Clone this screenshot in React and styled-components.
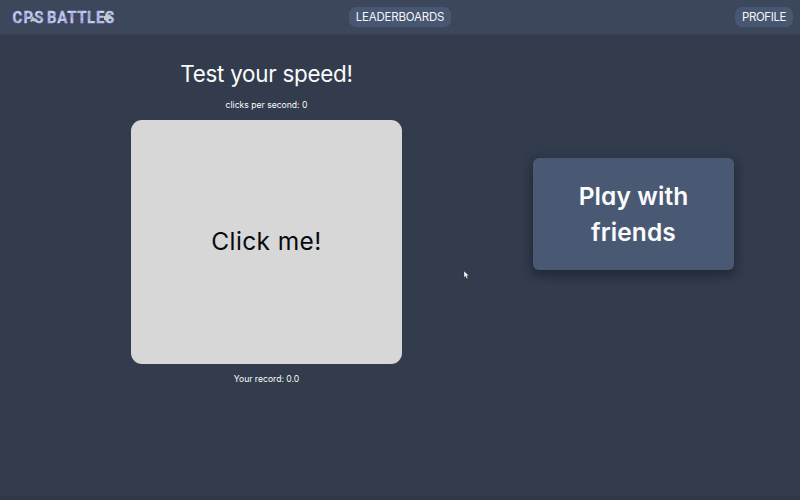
import React from "react";
import styled, { createGlobalStyle } from "styled-components";

const GlobalStyle = createGlobalStyle`
  *, *::before, *::after { box-sizing: border-box; }
  body {
    margin: 0;
    background: #323c4d;
    color: #fafbfc;
    font-family: Inter, "Open Sans", sans-serif;
    font-feature-settings: "cv11" 1;
    overflow: hidden;
  }
  button { font: inherit; font-feature-settings: inherit; border: 0; padding: 0; cursor: pointer; }
`;

const Page = styled.div`
  height: 500px;
  display: flex;
  flex-direction: column;
  border-bottom: 4px solid #303746;
`;

const Header = styled.header`
  height: 35px;
  flex: none;
  display: grid;
  grid-template-columns: 1fr auto 1fr;
  align-items: center;
  padding: 0 7px;
  background: #3d475b;
  border-bottom: 1px solid #384153;
`;

const Brand = styled.div`
  display: flex;
  align-items: center;
  padding-left: 5px;
`;

const NavButton = styled.button`
  justify-self: ${(p) => p.$side || "center"};
  width: ${(p) => p.$width}px;
  height: 20px;
  border-radius: 7px;
  background: #475671;
  color: #f4f6fa;
  font-size: 11.5px;
  line-height: 21px;
  letter-spacing: ${(p) => p.$tracking}px;
  white-space: nowrap;
`;

const Main = styled.main`
  display: grid;
  grid-template-columns: 533px 1fr;
  align-items: start;
`;

const SpeedTest = styled.section`
  display: flex;
  flex-direction: column;
  align-items: center;
  padding-top: 22px;
`;

const Title = styled.h1`
  margin: 0;
  font-size: 22.4px;
  font-weight: 400;
  line-height: 34px;
  letter-spacing: -0.25px;
`;

const Stat = styled.p`
  margin: ${(p) => p.$gap}px 0 0;
  font-size: 8.6px;
  line-height: 13px;
`;

const ClickArea = styled.button`
  width: 271px;
  height: 244px;
  margin-top: 7.6px;
  border-radius: 11px;
  background: #d7d7d7;
  color: #080a10;
  font-size: 24.5px;
  line-height: 30px;
  letter-spacing: 0.4px;
  padding-bottom: 1px;
`;

const PlayButton = styled.button`
  width: 201px;
  height: 112px;
  margin: 123px 0 0;
  border-radius: 6px;
  background: #4a5973;
  color: #fafbfc;
  font-size: 24.5px;
  font-weight: 600;
  line-height: 36px;
  letter-spacing: 0.1px;
  box-shadow: 0 5px 10px rgba(15, 20, 30, 0.4), 0 2px 14px rgba(15, 20, 30, 0.2);
`;

const Line = styled.span`
  display: block;
`;

const Pointer = styled.svg`
  position: absolute;
  left: 463px;
  top: 270px;
  pointer-events: none;
`;

const Logo = () => (
  <svg width="106" height="20" viewBox="0 0 106 20" role="img" aria-label="CPS Battles">
    <defs>
      <pattern id="flecks" width="19" height="13" patternUnits="userSpaceOnUse">
        <rect width="19" height="13" fill="#c3c6ef" />
        <path d="M0 3l5-3 3 2-5 4zM9 7l5-2 5 5-5 3zM2 12l3-4 3 2z" fill="#a3a2e2" />
        <path d="M7 5l2-2 3 1-2 3zM15 3l3-2v3zM1 8l2-1 1 2z" fill="#e0e4f5" />
      </pattern>
    </defs>
    <g transform="scale(0.86 1)" fill="url(#flecks)" stroke="#b9bbe8" strokeWidth="0.4" fontFamily="Roboto, sans-serif" fontWeight="700" fontSize="17.3">
      <text x="0.6" y="15.6" textLength="36" lengthAdjust="spacing">CPS</text>
      <text x="40.8" y="15.6" textLength="78" lengthAdjust="spacing">BATTLES</text>
    </g>
    <path d="M18 14l2-3 1-2 1 2 3 1-2 1 1 2-3-1-2 1z" fill="#bec4ce" />
    <path d="M90 9l3 0 1-3 2 2 3-1-1 3 2 2-3 0-1 3-2-2-2 0 0-3z" fill="#c3c9d0" />
  </svg>
);

export default function App() {
  return (
    <>
      <GlobalStyle />
      <Page>
        <Header>
          <Brand><Logo /></Brand>
          <NavButton $width={102} $tracking={-0.2}>LEADERBOARDS</NavButton>
          <NavButton $width={58} $tracking={-0.4} $side="end">PROFILE</NavButton>
        </Header>
        <Main>
          <SpeedTest>
            <Title>Test your speed!</Title>
            <Stat $gap={8}>clicks per second: 0</Stat>
            <ClickArea>Click me!</ClickArea>
            <Stat $gap={9}>Your record: 0.0</Stat>
          </SpeedTest>
          <PlayButton>
            <Line>Play with</Line>
            <Line>friends</Line>
          </PlayButton>
        </Main>
      </Page>
      <Pointer width="7" height="10" viewBox="0 0 7 10" aria-hidden="true">
        <path d="M1 1v6.5l1.5-1.3 1.1 2.6 1.3-.6-1.1-2.4H6z" fill="#fff" stroke="#20262f" strokeWidth="0.4" />
      </Pointer>
    </>
  );
}
